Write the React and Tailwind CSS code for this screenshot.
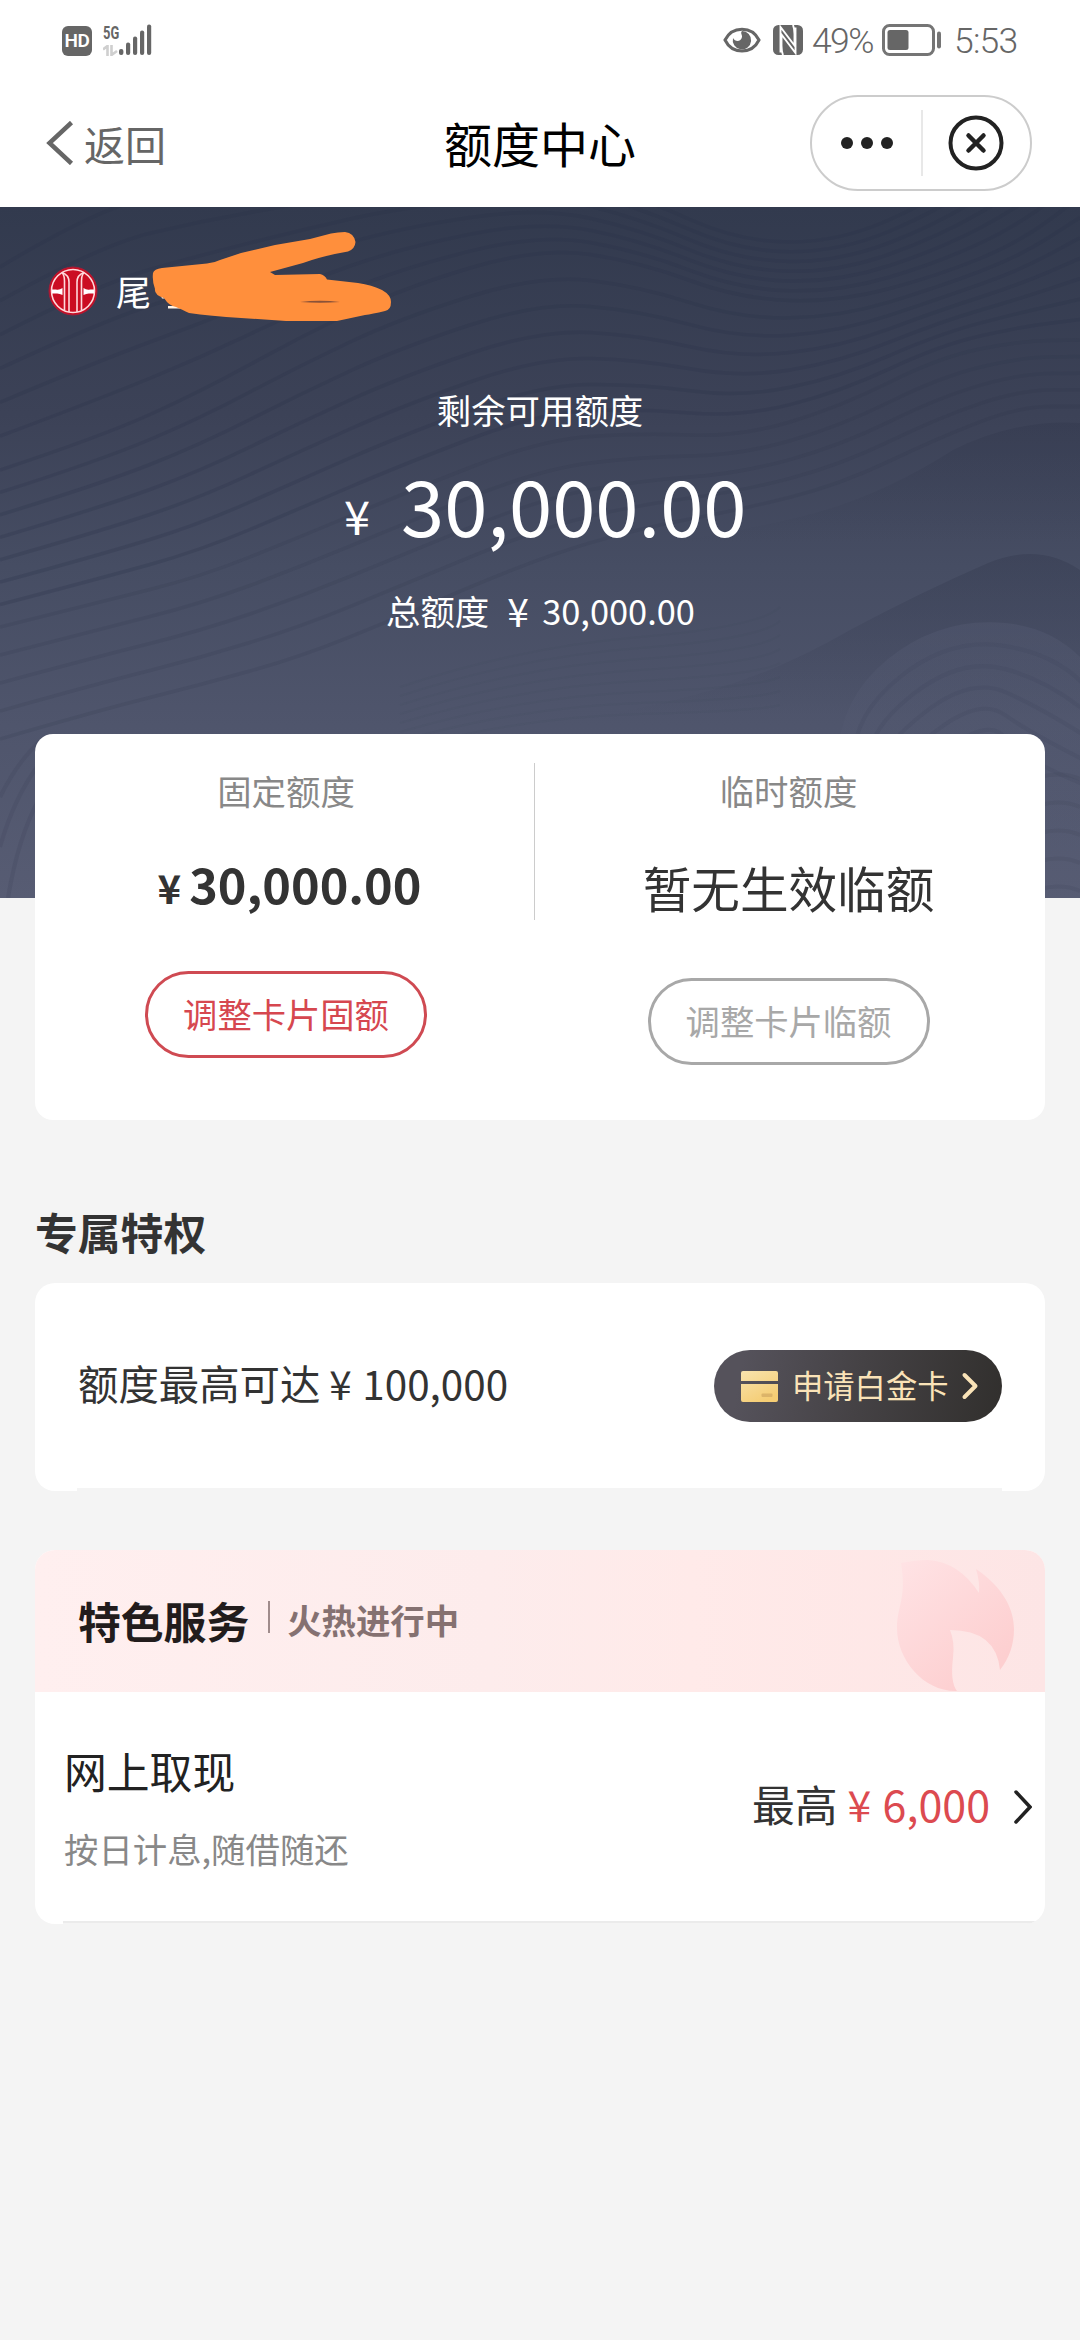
import React from 'react';

// x positions shared by the contour lines of the header background
const XS = [0, 100, 200, 300, 400, 540, 640, 740, 840, 940, 1020, 1080];

const RIDGES = [
  [60, 0, -20, -30, -40, -40, -10, 35, 35, -10, -70, -130],
  [263, 230, 185, 130, 82, 40, 55, 92, 95, 68, 35, -10],
  [420, 395, 370, 330, 288, 233, 226, 230, 200, 150, 134, 133],
  [560, 530, 505, 480, 440, 380, 345, 321, 297, 250, 216, 216],
];

const STEPS = [6, 7, 5];
const OPACITY = [0.26, 0.26, 0.14];

function smooth(points) {
  let d = `M${points[0][0]} ${points[0][1]}`;
  for (let i = 1; i < points.length - 1; i++) {
    const mx = (points[i][0] + points[i + 1][0]) / 2;
    const my = (points[i][1] + points[i + 1][1]) / 2;
    d += ` Q${points[i][0]} ${points[i][1]} ${mx} ${my}`;
  }
  const last = points[points.length - 1];
  return `${d} L${last[0]} ${last[1]}`;
}

const contours = [];
RIDGES.slice(0, -1).forEach((from, r) => {
  const to = RIDGES[r + 1];
  for (let s = 0; s < STEPS[r]; s++) {
    const t = s / STEPS[r];
    contours.push({
      d: smooth(XS.map((x, i) => [x, from[i] + (to[i] - from[i]) * t])),
      opacity: OPACITY[r],
    });
  }
});

function HeaderWaves() {
  return (
    <svg className="absolute inset-0 w-full h-full" viewBox="0 0 1080 691" preserveAspectRatio="none" fill="none">
      <defs>
        <linearGradient id="shade" x1="0" y1="0" x2="0" y2="1">
          <stop offset="0" stopColor="#30364b" stopOpacity="0.35" />
          <stop offset="0.9" stopColor="#30364b" stopOpacity="0" />
        </linearGradient>
        <linearGradient id="bump" x1="0" y1="0" x2="0" y2="1">
          <stop offset="0" stopColor="#555b73" stopOpacity="0.4" />
          <stop offset="1" stopColor="#555b73" stopOpacity="0.05" />
        </linearGradient>
      </defs>
      {contours.map((line, i) => (
        <path key={i} d={line.d} stroke="#2c3248" strokeOpacity={line.opacity} strokeWidth="3.5" />
      ))}
      <path d="M600 345 Q746 325 815 306 T953 243 Q1015 212 1080 216 V350 H600Z" fill="url(#shade)" />
      <path d="M560 515 Q643 503 712 483 T850 423 Q919 386 988 356 Q1039 335 1080 363 V527 H560Z" fill="url(#shade)" />
      <path d="M838 560 Q836 494 888 452 T1005 416 Q1050 420 1080 450 V691 H838Z" fill="url(#bump)" />
      {[1, 2, 3, 4, 5].map((i) => (
        <path
          key={i}
          d={`M${838 + i * 16} 560 Q${836 + i * 14} ${494 + i * 16} ${888 + i * 12} ${452 + i * 18} T1005 ${416 + i * 23} T1090 ${460 + i * 24}`}
          stroke="#3a4058"
          strokeOpacity="0.17"
          strokeWidth="4"
        />
      ))}
      {[0, 1, 2, 3, 4].map((i) => (
        <path key={i} d={`M1040 ${570 + i * 28} Q1062 ${564 + i * 28} 1080 ${572 + i * 28}`} stroke="#3f455c" strokeOpacity="0.2" strokeWidth="4" />
      ))}
      {[0, 1, 2, 3, 4, 5, 6, 7].map((i) => (
        <path key={i} d={`M400 ${480 + i * 9} Q520 ${440 + i * 10} 640 ${430 + i * 11} T780 ${400 + i * 14}`} stroke="#3a4058" strokeOpacity="0.07" strokeWidth="2" />
      ))}
      <path d="M0 590 Q20 550 45 530 M0 640 Q14 590 40 556 M8 691 Q18 630 40 590" stroke="#3f455c" strokeOpacity="0.25" strokeWidth="4" />
    </svg>
  );
}

function StatusBar() {
  return (
    <div className="h-[80px] flex items-center px-[62px] text-[#666]">
      <div className="w-[30px] h-[30px] mt-[1px] rounded-[6px] bg-[#666] text-white font-['Roboto'] font-semibold text-[19px] leading-none flex items-center justify-center tracking-tight">
        HD
      </div>
      <div className="ml-[11px] w-[16px] h-[32px] flex flex-col">
        <span className="font-['Roboto'] font-bold text-[19px] leading-[17px] inline-block origin-left scale-x-[0.68]">5G</span>
        <svg className="mt-[4px] shrink-0" width="15" height="11" viewBox="0 0 15 11" fill="none" stroke="#cfcfcf" strokeWidth="2.6">
          <path d="M0 4.5 L4.5 1 V11 M8.5 0 V10 L14 6" />
        </svg>
      </div>
      <svg width="34" height="32" viewBox="0 0 34 32" fill="#666">
        <rect x="0" y="25" width="4.4" height="6" rx="2" />
        <rect x="7" y="18.5" width="4.2" height="12.5" rx="2" />
        <rect x="14" y="12.5" width="4.2" height="18.5" rx="2" />
        <rect x="21" y="6.5" width="4.2" height="24.5" rx="2" />
        <rect x="28" y="0.5" width="4.2" height="30.5" rx="2" />
      </svg>
      <div className="ml-auto flex items-center">
        <svg width="38" height="26" viewBox="0 0 38 26">
          <path d="M2 13 C9 -1.5 29 -1.5 36 13 C29 27.5 9 27.5 2 13Z" fill="none" stroke="#666" strokeWidth="3" />
          <path d="M19 4 A9.2 9.2 0 1 1 10 11 C12 15 18 15 19 10 C19.5 8 17 6 19 4Z" fill="#666" />
        </svg>
        <svg className="ml-[12px]" width="30" height="30" viewBox="0 0 30 30">
          <rect width="30" height="30" rx="5.5" fill="#666" />
          <path d="M7.5 27.5 V2 L21.5 20.5 V9 Q21.5 4 20 0 M22.5 2.5 V28 L8.5 9.5 V21 Q8.5 26 10 30" fill="none" stroke="#fff" strokeWidth="1.9" />
        </svg>
        <span className="ml-[9px] w-[64px] pt-[2px] font-['Roboto'] font-[350] text-[35.5px] leading-[40px] tracking-[-1.6px]">49%</span>
        <svg className="ml-[6px]" width="60" height="32" viewBox="0 0 60 32">
          <rect x="1.5" y="1.5" width="50" height="29" rx="6" fill="none" stroke="#757575" strokeWidth="3" />
          <rect x="5.5" y="6" width="21" height="20" rx="2.5" fill="#666" />
          <rect x="55" y="7.5" width="4" height="17" rx="2" fill="#757575" />
        </svg>
        <span className="ml-[12px] w-[64px] pt-[2px] font-['Roboto'] font-[350] text-[35.5px] leading-[40px] tracking-[-0.8px]">5:53</span>
      </div>
    </div>
  );
}

function NavBar() {
  return (
    <div className="h-[127px] relative flex items-center justify-between pl-[46px] pr-[48px] pb-[1px]">
      <div className="flex items-center text-[#666] text-[41px] leading-none gap-[10px]">
        <svg width="28" height="44" viewBox="0 0 28 44" fill="none" stroke="#666" strokeWidth="4.5">
          <path d="M25.5 1.5 L3.5 22 L25.5 42.5" />
        </svg>
        返回
      </div>
      <h1 className="absolute left-0 right-0 pb-[3px] text-center text-black text-[48px] leading-none pointer-events-none">额度中心</h1>
      <div className="w-[222px] h-[96px] rounded-full border-2 border-[#ccc] flex items-center">
        <div className="w-[109px] flex justify-center gap-[8px]">
          <span className="w-[12px] h-[12px] rounded-full bg-[#222]" />
          <span className="w-[12px] h-[12px] rounded-full bg-[#222]" />
          <span className="w-[12px] h-[12px] rounded-full bg-[#222]" />
        </div>
        <div className="w-[2px] h-[66px] bg-[#e8e8e8]" />
        <svg className="ml-[25px]" width="56" height="56" viewBox="0 0 56 56" fill="none" stroke="#222">
          <circle cx="28" cy="28" r="25.5" strokeWidth="4" />
          <path d="M20.5 20.5 L35.5 35.5 M35.5 20.5 L20.5 35.5" strokeWidth="4.5" strokeLinecap="round" />
        </svg>
      </div>
    </div>
  );
}

function BankLogo() {
  return (
    <svg width="50" height="50" viewBox="-25 -25 50 50" fill="none">
      <circle r="24" fill="#cb0d22" stroke="#a51c38" />
      <circle r="21.5" stroke="#ffd9dc" strokeWidth="1.6" />
      <g stroke="#ffd9dc" strokeWidth="1.6">
        <path d="M-11 -18 Q-8.5 -16 -8.5 -10 V19.5" />
        <path d="M-11 -18.5 Q-4 -16 -4 -9 V21" />
        <path d="M11 -18 Q8.5 -16 8.5 -10 V19.5" />
        <path d="M11 -18.5 Q4 -16 4 -9 V21" />
      </g>
      <path d="M-17 -1.5 Q-14 -0.5 -10.5 -3 V4 Q-14 2 -17 2.5 H-21 V-1.5Z M17 -1.5 Q14 -0.5 10.5 -3 V4 Q14 2 17 2.5 H21 V-1.5Z" fill="#fff" />
    </svg>
  );
}

function Scribble() {
  return (
    <svg className="absolute left-[150px] top-[20px]" width="245" height="98" viewBox="150 20 245 98">
      <path d="M168 99 h12 v2.5 h-12z M161 89 l4 2.5 h-3z" fill="#fff3e6" />
      <path
        d="M153 66 Q154 62 162 61 L207 56.5 Q214 56 220 53 L241 46 L275 38 L310 32 L331 26.5 Q338 25 345 25 Q354 26 355.5 35 Q355 42 348 44.5 Q322 49 303 56 L270 65 L275 68 L320 67 Q325 68 327 72.5 L358 76 Q372 78 382 83 Q391 88 391 95 Q391 103 385 104 Q372 107 365 108 L337 114 H286 L241 111 Q210 109 189 106 Q181 102 176 100 Q169 99 164 91 Q154 88 155 82 Q152 74 153 66Z"
        fill="#ff8f3c"
      />
      <path d="M300 95 Q320 92.5 340 95 Q320 96.5 300 95Z" fill="#8a5238" />
    </svg>
  );
}

function LimitHeader() {
  return (
    <div className="relative h-[691px] bg-[linear-gradient(180deg,#323a4e_0%,#3c4257_30%,#464d63_52%,#4f556c_75%,#575c73_100%)] text-white">
      <HeaderWaves />
      <div className="relative pt-[59px]">
        <div className="h-[50px] pl-[48px] flex items-center gap-[18px]">
          <BankLogo />
          <span className="text-[35px] leading-none pb-[2px]">尾</span>
        </div>
        <div className="mt-[75px] text-center text-[34.4px] leading-[36px]">剩余可用额度</div>
        <div className="mt-[32px] h-[88px] pl-[344px] flex items-start">
          <span className="text-[47px] leading-[88px] w-[57px] pt-[12px]">¥</span>
          <span className="text-[77.8px] leading-[88px]">30,000.00</span>
        </div>
        <div className="mt-[43px] flex items-center pl-[386px] leading-[40px]">
          <span className="text-[34.4px]">总额度</span>
          <span className="ml-[18px] w-[35px] text-[39px]">¥</span>
          <span className="text-[34.4px]">30,000.00</span>
        </div>
      </div>
      <Scribble />
    </div>
  );
}

function LimitCard() {
  return (
    <div className="relative -mt-[164px] h-[386px] rounded-[18px] bg-white flex text-center">
      <div className="w-[499px] pl-[3px] pt-[38px]">
        <div className="text-[34.4px] leading-[36px] text-[#888]">固定额度</div>
        <div className="mt-[48px] h-[54px] pl-[7px] flex items-baseline justify-center font-bold text-[#333] leading-[54px]">
          <span className="text-[40px] mr-[8px]">¥</span>
          <span className="text-[48.6px]">30,000.00</span>
        </div>
        <button className="mt-[61px] mx-auto w-[282px] h-[87px] pb-[3px] rounded-full border-3 border-[#cf4a52] text-[#d6474f] text-[34.3px] flex items-center justify-center leading-none">
          调整卡片固额
        </button>
      </div>
      <div className="w-px h-[157px] mt-[29px] bg-[#ccc]" />
      <div className="w-[510px] pr-[3px] pt-[38px]">
        <div className="text-[34.4px] leading-[36px] text-[#888]">临时额度</div>
        <div className="mt-[50px] h-[58px] text-[48.6px] leading-[58px] text-[#333]">暂无生效临额</div>
        <button className="mt-[62px] mx-auto w-[282px] h-[87px] pb-[3px] rounded-full border-3 border-[#a8a8a8] text-[#a8a8a8] text-[34.3px] flex items-center justify-center leading-none">
          调整卡片临额
        </button>
      </div>
    </div>
  );
}

function PrivilegeCard() {
  return (
    <div className="h-[208px] relative rounded-[20px] bg-white flex items-center justify-between px-[43px]">
      <div className="flex pb-[8px] text-[40.4px] leading-none text-[#333]">
        额度最高可达
        <span className="ml-[9px] w-[33px]">¥</span>
        100,000
      </div>
      <button className="w-[288px] h-[72px] mb-[2px] rounded-full bg-[linear-gradient(100deg,#55525b_10%,#454245_50%,#312f2d_100%)] flex items-center pl-[27px] text-[31.3px] leading-none text-[#fae3b8]">
        <svg className="shrink-0" width="37" height="31" viewBox="0 0 37 31">
          <defs>
            <linearGradient id="gold" x1="0" y1="0" x2="0.6" y2="1">
              <stop offset="0" stopColor="#f8e3ae" />
              <stop offset="1" stopColor="#f5cd74" />
            </linearGradient>
          </defs>
          <path d="M2 0 H35 Q37 0 37 2 V10 H0 V2 Q0 0 2 0Z M0 13 H37 V29 Q37 31 35 31 H2 Q0 31 0 29Z" fill="url(#gold)" />
          <rect x="20.5" y="22.5" width="11" height="3.5" rx="1" fill="#dcb469" />
        </svg>
        <span className="ml-[14px] pb-[2px] w-[169px] shrink-0 text-left">申请白金卡</span>
        <svg className="shrink-0" width="18" height="28" viewBox="0 0 18 28" fill="none" stroke="#fae3b8" strokeWidth="4" strokeLinecap="round" strokeLinejoin="round">
          <path d="M3.5 3 L14.5 14 L3.5 25" />
        </svg>
      </button>
      <div className="absolute left-[42px] right-[43px] bottom-0 h-[3px] bg-[#f4f4f4]" />
    </div>
  );
}

function ServiceCard() {
  return (
    <div className="relative rounded-[20px] bg-white overflow-hidden">
      <div className="relative h-[142px] bg-[linear-gradient(90deg,#ffefef_0%,#fdecec_45%,#ffeae9_65%,#fde5e5_100%)] flex items-center pl-[43px]">
        <span className="pb-[2px] text-[42.8px] leading-none font-bold text-[#221c1c]">特色服务</span>
        <span className="ml-[19px] mb-[8px] w-[2px] h-[32px] bg-[#a08c8c]" />
        <span className="ml-[17px] pb-[3px] text-[34.4px] leading-none font-bold text-[#857171]">火热进行中</span>
        <svg className="absolute right-[31px] top-[10px]" width="118" height="132" viewBox="0 0 118 132">
          <defs>
            <linearGradient id="flame" x1="0" y1="0" x2="0.7" y2="0.9">
              <stop offset="0" stopColor="#ffe3e5" />
              <stop offset="1" stopColor="#fdcfd0" />
            </linearGradient>
          </defs>
          <path
            d="M5 3 Q20 0 32 0 Q63 2 83 33 Q84 22 80 9 C108 28 118 50 118 69 Q118 92 104 110 Q100 70 54 70 Q59 82 57 98 Q54 122 61 131 C28 132 1 100 1 68 C1 46 11 38 5 3Z"
            fill="url(#flame)"
          />
        </svg>
      </div>
      <div className="h-[232px] pl-[29px] pr-[13px] flex justify-between">
        <div className="pt-[56px]">
          <div className="text-[42.8px] leading-[44px] text-[#222]">网上取现</div>
          <div className="mt-[38px] text-[34.4px] leading-[36px] text-[#888]">按日计息,随借随还</div>
        </div>
        <div className="flex items-center pb-[9px] text-[42.8px] leading-none text-[#333]">
          最高
          <span className="ml-[10px] w-[35px] text-[#dc4a50]">¥</span>
          <span className="text-[43px] text-[#dc4a50]">6,000</span>
          <svg className="ml-[24px] mt-[6px]" width="18" height="34" viewBox="0 0 18 34" fill="none" stroke="#222" strokeWidth="3.5" strokeLinecap="round">
            <path d="M2 2 L16 17 L2 32" />
          </svg>
        </div>
      </div>
      <div className="absolute left-[28px] right-0 bottom-0 h-[3px] bg-[#ebebeb] border-b border-[#f4f4f4]" />
    </div>
  );
}

export default function App() {
  return (
    <div className="w-[1080px] h-[2340px] bg-[#f4f4f4] overflow-hidden font-['Noto_Sans_CJK_SC',sans-serif]">
      <div className="bg-white">
        <StatusBar />
        <NavBar />
      </div>
      <LimitHeader />
      <div className="px-[35px]">
        <LimitCard />
        <h2 className="mt-[89px] text-[42.8px] leading-[44px] font-bold text-[#333]">专属特权</h2>
        <div className="mt-[30px]">
          <PrivilegeCard />
        </div>
        <div className="mt-[59px]">
          <ServiceCard />
        </div>
      </div>
    </div>
  );
}
